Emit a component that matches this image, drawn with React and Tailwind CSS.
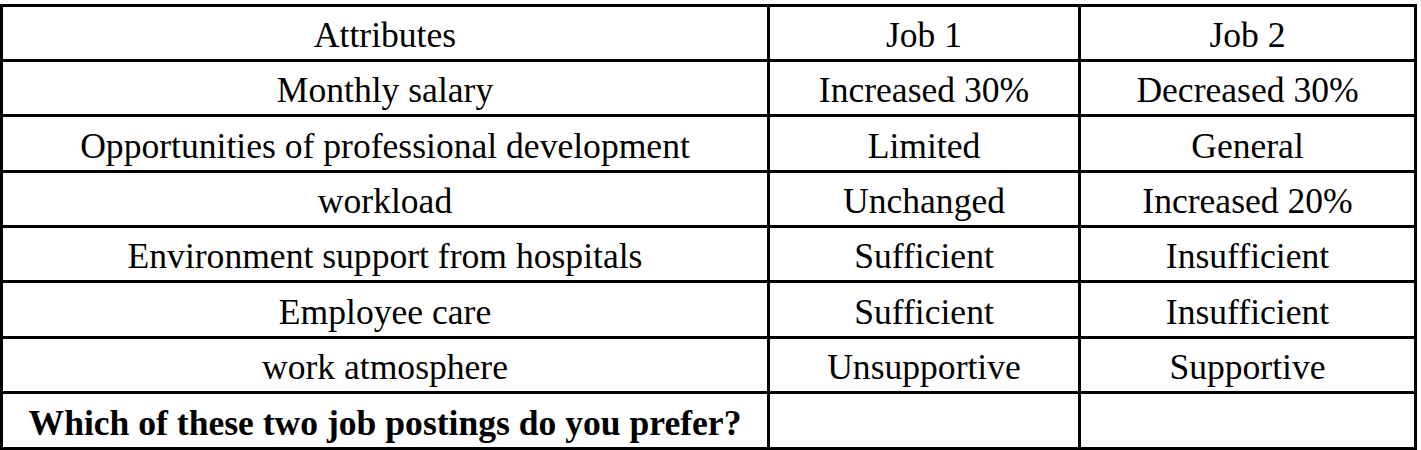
export default function App() {
  const rows = [
    ["Attributes", "Job 1", "Job 2", "h-[55px]"],
    ["Monthly salary", "Increased 30%", "Decreased 30%", "h-[55px]"],
    ["Opportunities of professional development", "Limited", "General", "h-[56px]"],
    ["workload", "Unchanged", "Increased 20%", "h-[55px]"],
    ["Environment support from hospitals", "Sufficient", "Insufficient", "h-[55px]"],
    ["Employee care", "Sufficient", "Insufficient", "h-[56px]"],
    ["work atmosphere", "Unsupportive", "Supportive", "h-[55px]"],
  ];
  return (
    <div className="w-[1421px] h-[450px] bg-white pt-[4px] overflow-hidden font-['Liberation_Serif','Times_New_Roman',serif]">
      <div className="w-[1417px] border-l-[3px] border-t-[3px] border-black grid grid-cols-[767px_311px_336px] text-black text-[35.6px] leading-none">
        {rows.map(([a, b, c, h], i) => (
          <div key={i} className="contents">
            <div className={`${h} border-r-[3px] border-b-[3px] border-black flex items-center justify-center pt-[6px]`}>{a}</div>
            <div className={`${h} border-r-[3px] border-b-[3px] border-black flex items-center justify-center pt-[6px]`}>{b}</div>
            <div className={`${h} border-r-[3px] border-b-[3px] border-black flex items-center justify-center pt-[6px]`}>{c}</div>
          </div>
        ))}
        <div className="h-[56px] border-r-[3px] border-b-[3px] border-black flex items-center justify-center pt-[6px] font-bold">Which of these two job postings do you prefer?</div>
        <div className="h-[56px] border-r-[3px] border-b-[3px] border-black"></div>
        <div className="h-[56px] border-r-[3px] border-b-[3px] border-black"></div>
      </div>
    </div>
  );
}
